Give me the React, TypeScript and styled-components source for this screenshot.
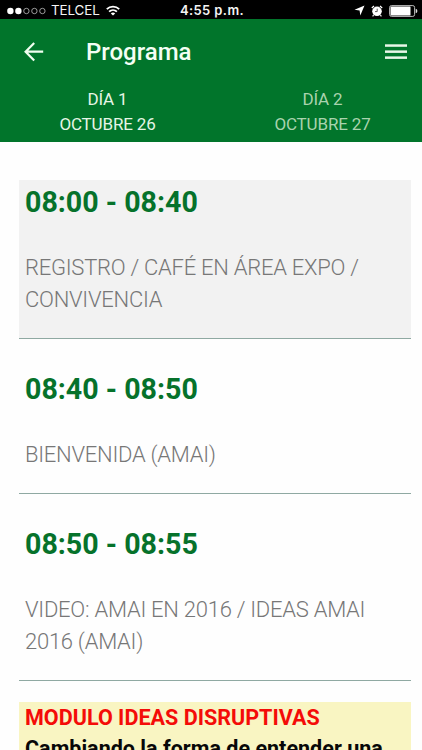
import React from "react";
import styled, { createGlobalStyle } from "styled-components";

const GlobalStyle = createGlobalStyle`
  * { box-sizing: border-box; }
  html, body { margin: 0; padding: 0; background: #fefefe; }
  body { font-family: Roboto, sans-serif; overflow: hidden; }
`;

const Screen = styled.main`
  width: 422px;
  height: 750px;
  overflow: hidden;
  background: #fefefe;
`;

const StatusBar = styled.div`
  display: grid;
  grid-template-columns: 1fr auto 1fr;
  align-items: center;
  height: 19px;
  padding: 2px 4px 0 6px;
  background: #000;
  color: #f4f4f4;
  font-family: Inter, sans-serif;
  font-size: 13px;
  line-height: 17px;
`;

const StatusGroup = styled.div<{ $end?: boolean }>`
  display: flex;
  align-items: center;
  justify-content: ${(p) => (p.$end ? "flex-end" : "flex-start")};
`;

const Carrier = styled.span`
  margin: 0 6px 0 4px;
  font-size: 13.4px;
  letter-spacing: -0.1px;
`;

const Clock = styled.span`
  font-weight: 600;
  font-size: 13px;
  letter-spacing: 0.4px;
`;

const Header = styled.header`
  height: 123px;
  background: #01752b;
  color: #fff;
`;

const TitleBar = styled.div`
  display: flex;
  align-items: center;
  height: 65px;
  padding: 0 15px 0 24px;
`;

const Title = styled.h1`
  flex: 1;
  margin: 0 0 0 42px;
  font-size: 24px;
  font-weight: 500;
  line-height: 30px;
  color: #f4fff4;
`;

const Tabs = styled.nav`
  display: grid;
  grid-template-columns: 215px 215px;
  padding-top: 3px;
`;

const Tab = styled.div<{ $active?: boolean }>`
  text-align: center;
  font-size: 17px;
  line-height: 25px;
  letter-spacing: -0.15px;
  color: ${(p) => (p.$active ? "#e6f5e6" : "#a9d3ae")};
`;

const Agenda = styled.section`
  display: flex;
  flex-direction: column;
  padding: 38px 11px 0 19px;
`;

const Session = styled.article<{ $shaded?: boolean }>`
  margin-bottom: 28px;
  padding: 1px 6px 22px;
  border-bottom: 1px solid #8fa9a2;
  background: ${(p) => (p.$shaded ? "#f2f2f2" : "transparent")};

  &:last-of-type { margin-bottom: 21px; }
`;

const Time = styled.h2`
  margin: 0 0 29px;
  font-size: 28.6px;
  font-weight: 700;
  line-height: 42px;
  color: #06722b;
`;

const Description = styled.p`
  margin: 0;
  font-size: 22px;
  font-weight: 300;
  line-height: 32px;
  letter-spacing: -0.26px;
  color: #777;
`;

const Module = styled.div`
  height: 60px;
  padding: 0 6px;
  background: #f9f5c2;
  font-size: 21.55px;
  font-weight: 700;
  line-height: 31px;
  white-space: nowrap;
`;

const ModuleName = styled.div`
  color: #f40c08;
`;

const ModuleTopic = styled.div`
  color: #080808;
`;

const SignalDots = () => (
  <svg width="41" height="10" viewBox="0 0 41 10">
    {[0, 1, 2, 3, 4].map((i) => (
      <circle key={i} cx={4.4 + i * 8} cy="5" r={i < 2 ? 3.2 : 2.7}
        fill={i < 2 ? "#fff" : "none"} stroke={i < 2 ? "none" : "#aaa"} strokeWidth="0.9" />
    ))}
  </svg>
);

const WifiIcon = () => (
  <svg width="14" height="11" viewBox="0 0 14 11" fill="none" stroke="#fff" strokeWidth="1.8">
    <path d="M.8 4.1C4.2.7 9.8.7 13.2 4.1" />
    <path d="M3.1 6.6C5.3 4.5 8.7 4.5 10.9 6.6" />
    <path d="M7 10.6 4.8 8.4Q7 6.6 9.2 8.4Z" fill="#fff" stroke="none" />
  </svg>
);

const LocationIcon = () => (
  <svg width="11" height="11" viewBox="0 0 11 11">
    <path d="M10.5.5 6.3 10.5 5.6 5.5.5 4.8Z" fill="#fff" />
  </svg>
);

const AlarmIcon = styled(({ className }: { className?: string }) => (
  <svg className={className} width="12" height="12" viewBox="0 0 12 12">
    <circle cx="6" cy="6.3" r="4.8" fill="#fff" />
    <path d="M.8 3 3 1M11.2 3 9 1M2.6 10.2 1.6 11.3M9.4 10.2l1 1.1" stroke="#fff" strokeWidth="1.2" />
    <path d="M6.2 3.7V6.6H4" fill="none" stroke="#333" strokeWidth=".8" />
  </svg>
))`
  margin: 0 6px 0 6px;
`;

const BatteryIcon = () => (
  <svg width="29" height="12" viewBox="0 0 29 12">
    <rect x=".6" y=".6" width="25" height="10.8" rx="1.8" fill="none" stroke="#bbb" />
    <rect x="1.5" y="1.5" width="20" height="9" rx=".5" fill="#fff" />
    <path d="M26.7 3.8Q28.4 4 28.4 6T26.7 8.2Z" fill="#ddd" />
  </svg>
);

const BackIcon = () => (
  <svg width="20" height="20" viewBox="0 0 20 20" fill="none" stroke="#f0fff0" strokeWidth="2.2">
    <path d="M10.2 1 1.6 9.7l8.6 8.8M1.8 9.7H19.2" />
  </svg>
);

const MenuIcon = () => (
  <svg width="22" height="16" viewBox="0 0 22 16" fill="#e8f7e8">
    <rect y="0.3" width="22" height="2.5" />
    <rect y="6.4" width="22" height="2.5" />
    <rect y="12.4" width="22" height="2.5" />
  </svg>
);

const sessions = [
  { time: "08:00 - 08:40", lines: ["REGISTRO / CAFÉ EN ÁREA EXPO /", "CONVIVENCIA"], shaded: true },
  { time: "08:40 - 08:50", lines: ["BIENVENIDA (AMAI)"] },
  { time: "08:50 - 08:55", lines: ["VIDEO: AMAI EN 2016 / IDEAS AMAI", "2016 (AMAI)"] },
];

export default function App() {
  return (
    <Screen>
      <GlobalStyle />
      <StatusBar>
        <StatusGroup>
          <SignalDots />
          <Carrier>TELCEL</Carrier>
          <WifiIcon />
        </StatusGroup>
        <Clock>4:55 p.m.</Clock>
        <StatusGroup $end>
          <LocationIcon />
          <AlarmIcon />
          <BatteryIcon />
        </StatusGroup>
      </StatusBar>
      <Header>
        <TitleBar>
          <BackIcon />
          <Title>Programa</Title>
          <MenuIcon />
        </TitleBar>
        <Tabs>
          <Tab $active>DÍA 1<br />OCTUBRE 26</Tab>
          <Tab>DÍA 2<br />OCTUBRE 27</Tab>
        </Tabs>
      </Header>
      <Agenda>
        {sessions.map((s) => (
          <Session key={s.time} $shaded={s.shaded}>
            <Time>{s.time}</Time>
            <Description>
              {s.lines.map((line, i) => (
                <React.Fragment key={line}>
                  {i > 0 && <br />}
                  {line}
                </React.Fragment>
              ))}
            </Description>
          </Session>
        ))}
        <Module>
          <ModuleName>MODULO IDEAS DISRUPTIVAS</ModuleName>
          <ModuleTopic>Cambiando la forma de entender una</ModuleTopic>
        </Module>
      </Agenda>
    </Screen>
  );
}
